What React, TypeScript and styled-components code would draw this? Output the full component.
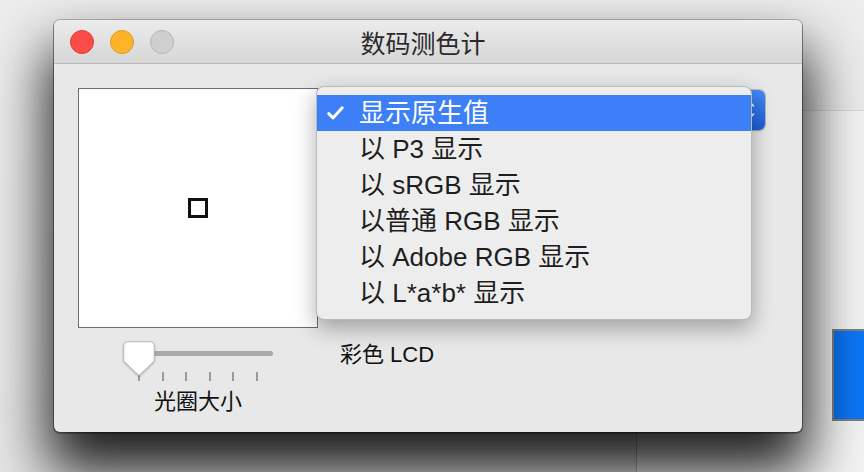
import React from 'react';
import styled, { createGlobalStyle } from 'styled-components';

const GlobalStyle = createGlobalStyle`
  html, body {
    margin: 0;
    padding: 0;
  }
  body {
    width: 864px;
    height: 472px;
    overflow: hidden;
    font-family: 'Liberation Sans', 'Noto Sans CJK SC', sans-serif;
    color: #111;
  }
`;

const Desktop = styled.div`
  position: relative;
  width: 864px;
  height: 472px;
  overflow: hidden;
  background: linear-gradient(180deg, #ededed 0%, #e6e6e6 100%);
`;

// the window lying behind the meter
const BackWindow = styled.div`
  position: absolute;
  left: 636px;
  top: 110px;
  right: -10px;
  bottom: -10px;
  background: #f4f4f4;
  border-left: 1px solid #b8b8b8;
  border-top: 1px solid #d8d8d8;
`;

const Swatch = styled.div`
  position: absolute;
  left: 195px;
  top: 218px;
  width: 60px;
  height: 88px;
  background: linear-gradient(90deg, #0a6fe8 0%, #0a76f7 30%);
  border: 2px solid #7e7e7e;
`;

const Window = styled.div`
  position: absolute;
  left: 54px;
  top: 20px;
  width: 748px;
  height: 412px;
  border-radius: 6px;
  background: #e8e8e8;
  box-shadow: 0 0 0 1px rgba(0, 0, 0, 0.22), 0 1px 0 1px rgba(0, 0, 0, 0.25),
    0 34px 56px 6px rgba(0, 0, 0, 0.88);
  display: flex;
  flex-direction: column;
`;

const TitleBar = styled.div`
  height: 43px;
  flex: none;
  display: flex;
  align-items: center;
  padding-left: 16px;
  border-radius: 6px 6px 0 0;
  border-bottom: 1px solid #b9b9b9;
  background: linear-gradient(180deg, #ececec 0%, #d6d6d6 100%);
`;

const Lights = styled.div`
  display: flex;
  gap: 16px;
`;

const Light = styled.span<{ $fill: string; $edge: string }>`
  width: 24px;
  height: 24px;
  box-sizing: border-box;
  border-radius: 50%;
  background: ${(p) => p.$fill};
  border: 1px solid ${(p) => p.$edge};
`;

const Title = styled.div`
  flex: 1;
  text-align: center;
  padding: 0 146px 0 16px;
  font-size: 25px;
  line-height: 30px;
  color: #2a2a2a;
  font-family: 'Noto Sans CJK SC', sans-serif;
`;

const Body = styled.div`
  flex: 1;
  display: flex;
  flex-direction: column;
  padding: 24px 24px 0 24px;
`;

const TopRow = styled.div`
  display: flex;
  gap: 20px;
`;

const Preview = styled.div`
  width: 240px;
  height: 240px;
  box-sizing: border-box;
  border: 1px solid #6c6c6c;
  background: #fff;
  display: flex;
  align-items: center;
  justify-content: center;
`;

const Aperture = styled.div`
  width: 20px;
  height: 20px;
  box-sizing: border-box;
  border: 3px solid #111;
`;

const RightCol = styled.div`
  position: relative;
  width: 427px;
  margin-top: 2px;
`;

const PopupButton = styled.div`
  height: 40px;
  display: flex;
  align-items: center;
  box-sizing: border-box;
  border-radius: 6px;
  background: #fff;
  box-shadow: 0 0 0 1px rgba(0, 0, 0, 0.18), 0 1px 2px rgba(0, 0, 0, 0.2);
  font-size: 26px;
  padding-left: 21px;
`;

const ButtonLabel = styled.span`
  flex: 1;
`;

const ArrowCap = styled.div`
  width: 30px;
  height: 100%;
  border-radius: 0 6px 6px 0;
  background: linear-gradient(180deg, #4489f7 0%, #1d5ed9 100%);
  display: flex;
  align-items: center;
  justify-content: center;
`;

const Menu = styled.div`
  position: absolute;
  left: -22px;
  top: -4px;
  width: 436px;
  box-sizing: border-box;
  padding: 8px 0;
  border-radius: 8px;
  background: #ededed;
  border: 1px solid rgba(0, 0, 0, 0.22);
  box-shadow: 0 8px 22px rgba(0, 0, 0, 0.32);
  z-index: 2;
`;

const MenuItem = styled.div<{ $active?: boolean }>`
  height: 36px;
  display: flex;
  align-items: center;
  padding-left: 10px;
  font-size: 26px;
  line-height: 36px;
  color: ${(p) => (p.$active ? '#fff' : '#1e1e1e')};
  background: ${(p) => (p.$active ? '#3c7ff6' : 'transparent')};
`;

const CheckSlot = styled.span`
  width: 32px;
  flex: none;
  display: flex;
  align-items: center;
`;

const BottomRow = styled.div`
  display: flex;
  margin-top: 12px;
`;

const SliderBlock = styled.div`
  width: 240px;
  display: flex;
  flex-direction: column;
  align-items: center;
`;

const Slider = styled.div`
  position: relative;
  width: 150px;
  height: 42px;
`;

const Track = styled.div`
  margin: 11px 0 0 8px;
  width: 142px;
  height: 5px;
  border-radius: 3px;
  background: #aaaaaa;
`;

const Ticks = styled.div`
  display: flex;
  justify-content: space-between;
  margin-top: 16px;
  padding: 0 15px;
`;

const Tick = styled.span`
  width: 2px;
  height: 9px;
  background: #9a9a9a;
`;

const Thumb = styled.svg`
  position: absolute;
  left: 0;
  top: 1px;
  filter: drop-shadow(0 1px 1px rgba(0, 0, 0, 0.25));
`;

const SliderLabel = styled.div`
  margin-top: 6px;
  font-size: 22px;
  line-height: 28px;
`;

const ModeLabel = styled.div`
  margin: 1px 0 0 22px;
  font-size: 22px;
  line-height: 28px;
`;

const options = ['以 P3 显示', '以 sRGB 显示', '以普通 RGB 显示', '以 Adobe RGB 显示', '以 L*a*b* 显示'];

const App = () => {
  return (
    <Desktop>
      <GlobalStyle />
      <BackWindow>
        <Swatch />
      </BackWindow>
      <Window>
        <TitleBar>
          <Lights>
            <Light $fill='#fc4c48' $edge='#de3a36' />
            <Light $fill='#fdb42a' $edge='#dd9a1f' />
            <Light $fill='#cfcfcf' $edge='#b6b6b6' />
          </Lights>
          <Title>数码测色计</Title>
        </TitleBar>
        <Body>
          <TopRow>
            <Preview>
              <Aperture />
            </Preview>
            <RightCol>
              <PopupButton>
                <ButtonLabel>显示原生值</ButtonLabel>
                <ArrowCap>
                  <svg width='10' height='22' viewBox='0 0 10 22'>
                    <path d='M1.5 7 L5 3 L8.5 7 M1.5 15 L5 19 L8.5 15' fill='none' stroke='#fff' strokeWidth='1.6' strokeLinecap='round' strokeLinejoin='round' />
                  </svg>
                </ArrowCap>
              </PopupButton>
              <Menu>
                <MenuItem $active>
                  <CheckSlot>
                    <svg width='17' height='14' viewBox='0 0 17 14'>
                      <path d='M1.8 7.6 L6 12 L15.2 1.8' fill='none' stroke='#fff' strokeWidth='3' strokeLinecap='round' strokeLinejoin='round' />
                    </svg>
                  </CheckSlot>
                  显示原生值
                </MenuItem>
                {options.map((o) => (
                  <MenuItem key={o}>
                    <CheckSlot />
                    {o}
                  </MenuItem>
                ))}
              </Menu>
            </RightCol>
          </TopRow>
          <BottomRow>
            <SliderBlock>
              <Slider>
                <Track />
                <Ticks>
                  {[0, 1, 2, 3, 4, 5].map((i) => (
                    <Tick key={i} />
                  ))}
                </Ticks>
                <Thumb width='32' height='36' viewBox='0 0 32 36'>
                  <path d='M5 0.8 H27 Q31.2 0.8 31.2 5 V20 L16 34.5 L0.8 20 V5 Q0.8 0.8 5 0.8 Z' fill='#fff' stroke='#b9b9b9' strokeWidth='1' />
                </Thumb>
              </Slider>
              <SliderLabel>光圈大小</SliderLabel>
            </SliderBlock>
            <ModeLabel>彩色 LCD</ModeLabel>
          </BottomRow>
        </Body>
      </Window>
    </Desktop>
  );
};

export default App;
